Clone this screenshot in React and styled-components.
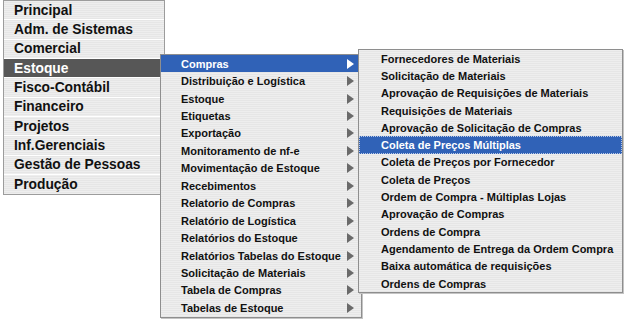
import React from "react";
import styled, { createGlobalStyle, css } from "styled-components";

const Global = createGlobalStyle`
  html, body { margin: 0; padding: 0; background: #ffffff; overflow: hidden; }
  * { box-sizing: border-box; }
`;

const stripes = css`
  background-color: #ebebeb;
  background-image: repeating-linear-gradient(
    to bottom,
    #eeeeee 0px,
    #eeeeee 1px,
    #e6e6e6 1px,
    #e6e6e6 2px
  );
`;

const Stage = styled.div`
  position: relative;
  width: 626px;
  height: 319px;
  padding-left: 3px;
  background: #ffffff;
  font-family: "Liberation Sans", Arial, sans-serif;
  font-weight: bold;
  color: #111;
`;

const MainMenu = styled.ul`
  list-style: none;
  margin: 0;
  padding: 0;
  width: 162px;
  border: 1px solid #9c9c9c;
  ${stripes}
`;

const MainItem = styled.li`
  height: 19.35px;
  display: flex;
  align-items: center;
  padding-left: 10px;
  font-size: 13.8px;
  border-bottom: 1px solid #ffffff;
  &:last-child { border-bottom: none; }
  ${(p) =>
    p.$active &&
    css`
      background: #575757;
      color: #ffffff;
    `}
`;

const SubMenu = styled.ul`
  position: absolute;
  list-style: none;
  margin: 0;
  padding: 0;
  left: ${(p) => p.$left}px;
  top: ${(p) => p.$top}px;
  width: ${(p) => p.$width}px;
  border: 1px solid #8e8e8e;
  box-shadow: 1px 1px 0 #c4c4c4;
  ${stripes}
`;

const SubItem = styled.li`
  position: relative;
  height: ${(p) => p.$h}px;
  display: flex;
  align-items: center;
  justify-content: space-between;
  padding-left: ${(p) => p.$pad}px;
  padding-right: 7px;
  font-size: 11px;
  white-space: nowrap;
  ${(p) =>
    p.$active &&
    css`
      background: #3062b7;
      color: #ffffff;
    `}
  ${(p) =>
    p.$focus &&
    css`
      outline: 1px dotted #b9c9e8;
      outline-offset: -1px;
    `}
`;

const Arrow = styled.span`
  width: 0;
  height: 0;
  border-left: 7px solid ${(p) => (p.$light ? "#ffffff" : "#6a6a6a")};
  border-top: 5px solid transparent;
  border-bottom: 5px solid transparent;
`;

const main = [
  "Principal",
  "Adm. de Sistemas",
  "Comercial",
  "Estoque",
  "Fisco-Contábil",
  "Financeiro",
  "Projetos",
  "Inf.Gerenciais",
  "Gestão de Pessoas",
  "Produção",
];

const estoque = [
  "Compras",
  "Distribuição e Logística",
  "Estoque",
  "Etiquetas",
  "Exportação",
  "Monitoramento de nf-e",
  "Movimentação de Estoque",
  "Recebimentos",
  "Relatorio de Compras",
  "Relatório de Logística",
  "Relatórios do Estoque",
  "Relatórios Tabelas do Estoque",
  "Solicitação de Materiais",
  "Tabela de Compras",
  "Tabelas de Estoque",
];

const compras = [
  "Fornecedores de Materiais",
  "Solicitação de Materiais",
  "Aprovação de Requisições de Materiais",
  "Requisições de Materiais",
  "Aprovação de Solicitação de Compras",
  "Coleta de Preços Múltiplas",
  "Coleta de Preços por Fornecedor",
  "Coleta de Preços",
  "Ordem de Compra - Múltiplas Lojas",
  "Aprovação de Compras",
  "Ordens de Compra",
  "Agendamento de Entrega da Ordem Compra",
  "Baixa automática de requisições",
  "Ordens de Compras",
];

export default function App() {
  return (
    <Stage>
      <Global />
      <MainMenu>
        {main.map((m) => (
          <MainItem key={m} $active={m === "Estoque"}>
            {m}
          </MainItem>
        ))}
      </MainMenu>
      <SubMenu $left={160} $top={54} $width={202}>
        {estoque.map((m, i) => (
          <SubItem key={m} $h={17.45} $pad={20} $active={i === 0}>
            <span>{m}</span>
            <Arrow $light={i === 0} />
          </SubItem>
        ))}
      </SubMenu>
      <SubMenu $left={358} $top={49} $width={265}>
        {compras.map((m, i) => (
          <SubItem key={m} $h={17.3} $pad={22} $active={i === 5} $focus={i === 5}>
            <span>{m}</span>
          </SubItem>
        ))}
      </SubMenu>
    </Stage>
  );
}
